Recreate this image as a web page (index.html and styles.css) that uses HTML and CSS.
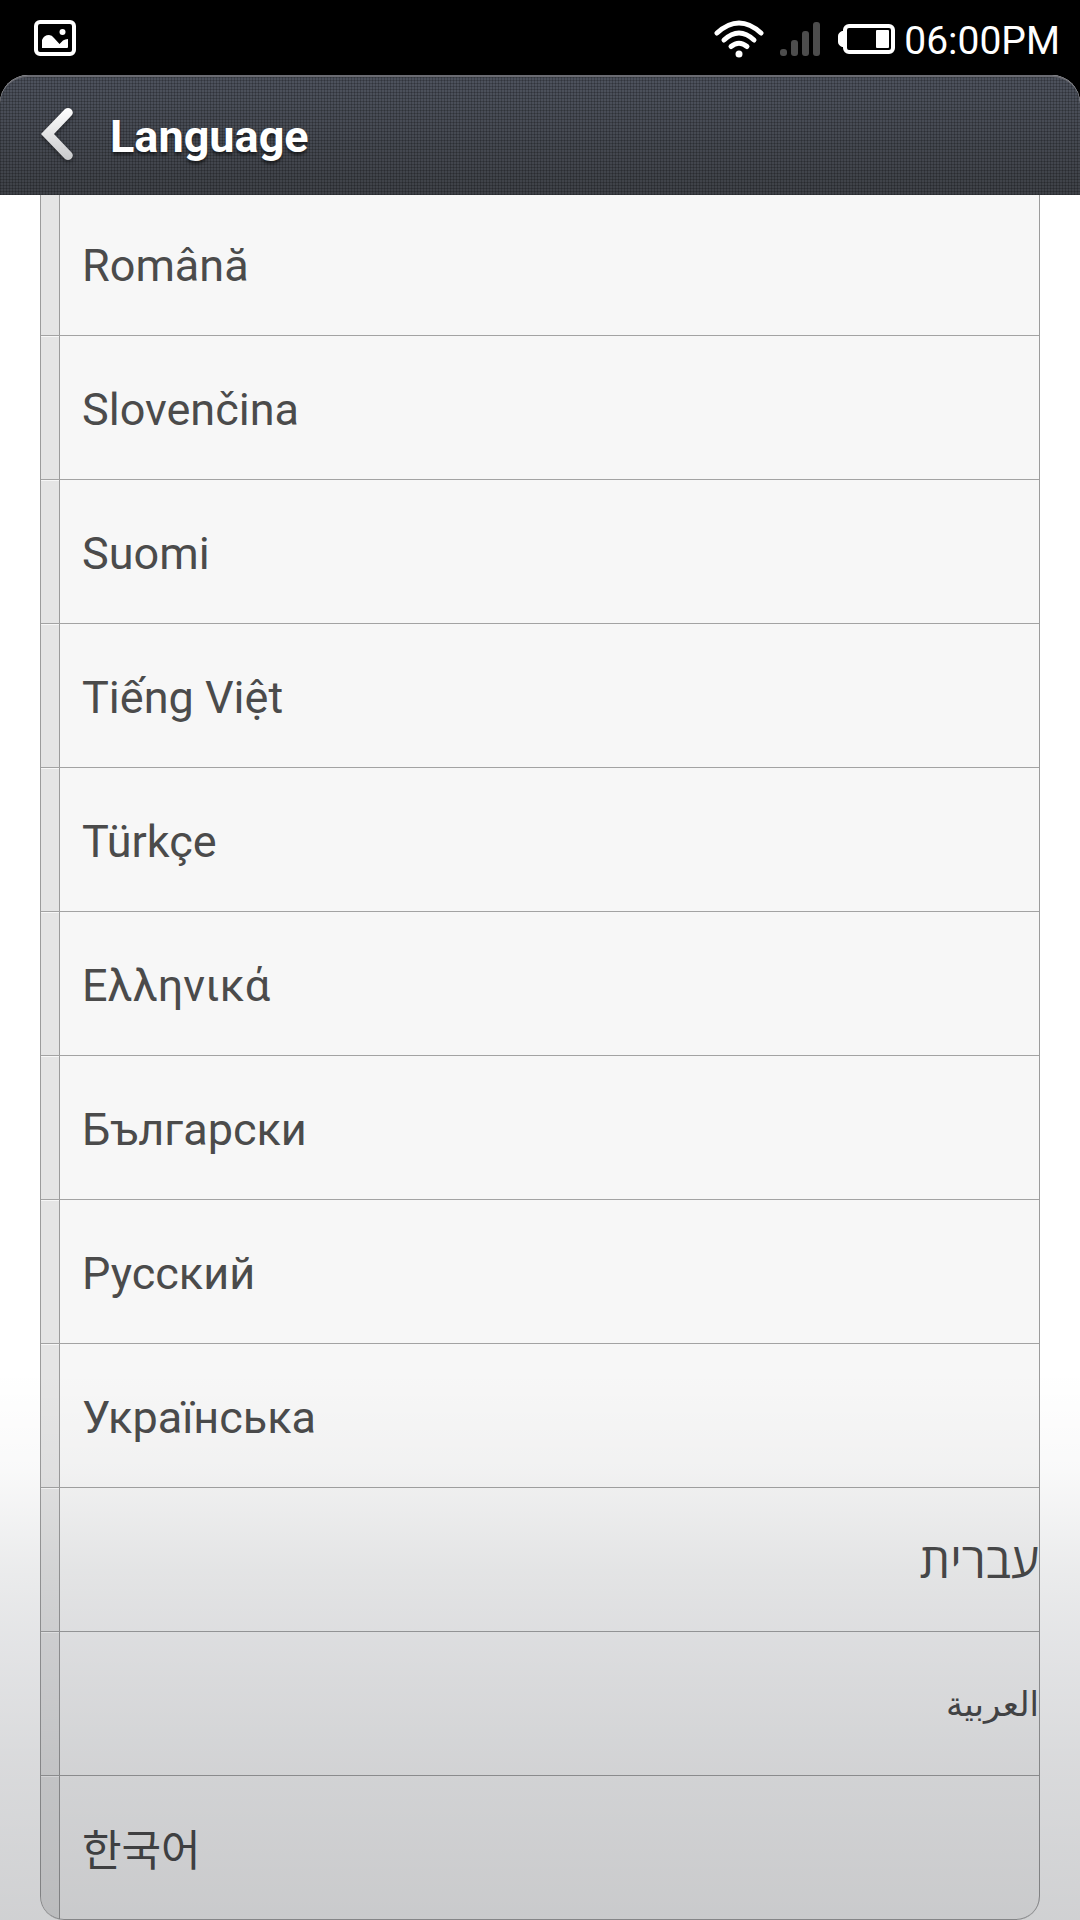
FILE: index.html
```html
<!DOCTYPE html>
<html lang="en">
<head>
    <meta charset="UTF-8">
    <meta name="viewport" content="width=device-width, initial-scale=1.0">
    <title>Language</title>
    <link rel="stylesheet" href="styles.css">
</head>
<body>

<div class="status-bar">
    <svg class="icon-picture" width="42" height="36" viewBox="0 0 42 36" aria-hidden="true">
        <rect x="2" y="2" width="38" height="32" rx="4" fill="none" stroke="#fff" stroke-width="4"/>
        <path d="M8 28V20Q10 15 15 15Q18 15 20 18L25.500 24L29 20.500Q31 19 34 19V27Q34 28 33 28Z" fill="#fff"/>
        <circle cx="28.500" cy="12" r="3" fill="#fff"/>
    </svg>
    <div class="status-icons">
        <svg width="50" height="38" viewBox="0 0 50 38" aria-hidden="true">
            <g fill="none" stroke="#fff" stroke-width="5" stroke-linecap="round">
                <path d="M3 13Q25 -7 47 13"/>
                <path d="M10 20Q25 6 40 20"/>
                <path d="M17 26.500Q25 20 33 26.500"/>
            </g>
            <circle cx="25" cy="34" r="3.500" fill="#fff"/>
        </svg>
        <svg class="icon-signal" width="40" height="34" viewBox="0 0 40 34" aria-hidden="true">
            <g fill="#4d4d4d">
                <rect x="0" y="27" width="7" height="7" rx="3"/>
                <rect x="11" y="18" width="7" height="16" rx="3"/>
                <rect x="22" y="9" width="7" height="25" rx="3"/>
                <rect x="33" y="0" width="7" height="34" rx="3"/>
            </g>
        </svg>
        <svg class="icon-battery" width="57" height="30" viewBox="0 0 57 30" aria-hidden="true">
            <path d="M7 7H4Q0 9 0 12V18Q0 21 4 23H7Z" fill="#fff"/>
            <rect x="7" y="2" width="48" height="26" rx="4" fill="none" stroke="#fff" stroke-width="4"/>
            <rect x="38" y="6" width="13" height="18" rx="1" fill="#fff"/>
        </svg>
        <span class="clock">06:00PM</span>
    </div>
</div>

<header class="title-bar">
    <button class="back" type="button" aria-label="Back">
        <svg width="34" height="54" viewBox="0 0 34 54" aria-hidden="true">
            <defs>
                <linearGradient id="arrow" x1="0" y1="0" x2="0" y2="1">
                    <stop offset="0" stop-color="#fff"/>
                    <stop offset="1" stop-color="#c8c9cb"/>
                </linearGradient>
            </defs>
            <path d="M1 27L25 2Q28 0 31 2Q34 5 32 8L14 27L32 46Q34 49 31 52Q28 54 25 52Z" fill="url(#arrow)"/>
        </svg>
    </button>
    <h1>Language</h1>
</header>

<main>
    <ul class="languages">
        <li><button type="button" lang="ro">Română</button></li>
        <li><button type="button" lang="sk">Slovenčina</button></li>
        <li><button type="button" lang="fi">Suomi</button></li>
        <li><button type="button" lang="vi">Tiếng Việt</button></li>
        <li><button type="button" lang="tr">Türkçe</button></li>
        <li><button type="button" lang="el">Ελληνικά</button></li>
        <li><button type="button" lang="bg">Български</button></li>
        <li><button type="button" lang="ru">Русский</button></li>
        <li><button type="button" lang="uk">Українська</button></li>
        <li><button type="button" class="rtl" lang="he" dir="rtl">עברית</button></li>
        <li><button type="button" class="rtl arabic" lang="ar" dir="rtl">العربية</button></li>
        <li><button type="button" class="korean" lang="ko">한국어</button></li>
    </ul>
</main>

</body>
</html>
```

FILE: styles.css
```css
* {
    box-sizing: border-box;
}
body {
    position: relative;
    margin: 0;
    background: #fff;
    color: #4b4b4b;
    font-family: Roboto, 'Open Sans', 'Noto Sans CJK KR', 'DejaVu Sans', sans-serif;
}
/* shade over the end of the list */
body::after {
    content: "";
    position: absolute;
    left: 0;
    right: 0;
    bottom: 0;
    height: 550px;
    pointer-events: none;
    background: linear-gradient(rgba(0, 10, 20, 0), rgba(0, 10, 20, 0.025) 18%, rgba(0, 10, 20, 0.08) 36%, rgba(0, 8, 25, 0.11) 50%, rgba(0, 6, 18, 0.15) 72%, rgba(0, 5, 14, 0.185));
}
.status-bar {
    display: flex;
    align-items: center;
    justify-content: space-between;
    height: 75px;
    padding: 0 20px 0 34px;
    background: #000;
    color: #fff;
}
.status-icons {
    display: flex;
    align-items: center;
    padding-top: 3px;
}
.icon-signal {
    margin-left: 16px;
}
.icon-battery {
    margin: 0 9px 0 18px;
}
.clock {
    padding-top: 4px;
    font-size: 39px;
    line-height: 60px;
}
.title-bar {
    position: relative;
    display: flex;
    align-items: center;
    height: 120px;
    margin-bottom: -3px;
    padding-left: 40px;
    border-top: 2px solid #6a6b72;
    border-radius: 28px 28px 0 0;
    background:
        repeating-linear-gradient(rgba(0, 0, 0, 0.2) 0 1px, transparent 1px 3px),
        repeating-linear-gradient(90deg, rgba(0, 0, 0, 0.2) 0 1px, transparent 1px 3px),
        linear-gradient(#4d525d, #3e4147);
    box-shadow: 0 -28px 0 28px #000;
    clip-path: inset(0);
    color: #fff;
}
.back {
    display: flex;
    padding: 0 0 4px;
    border: none;
    background: none;
    filter: drop-shadow(0 2px 2px rgba(0, 0, 0, 0.4));
    cursor: pointer;
}
.title-bar h1 {
    margin: 0 0 0 36px;
    padding-top: 2px;
    font-size: 45px;
    line-height: 60px;
    text-shadow: 0 3px 3px rgba(0, 0, 0, 0.5);
}
.languages {
    margin: 0 40px;
    padding: 0;
    border: solid #9c9c9c;
    border-width: 0 1px;
    border-radius: 0 0 24px 24px;
    background: #f7f7f7;
    list-style: none;
    overflow: hidden;
}
.languages li {
    height: 144px;
    padding-left: 18px;
    border-bottom: 1px solid #a3a3a3;
    background: linear-gradient(#f7f7f7 0 1px, #e5e5e5 1px) no-repeat 0 0 / 18px 100%;
}
.languages li:last-child {
    border-radius: 0 0 23px 23px;
}
.languages button {
    display: block;
    width: 100%;
    height: 100%;
    padding: 4px 0 0 22px;
    border: none;
    border-left: 1px solid #9c9c9c;
    background: none;
    color: inherit;
    font: inherit;
    font-size: 45px;
    text-align: start;
    cursor: pointer;
}
.languages .rtl {
    padding: 0;
    font-size: 48px;
}
.languages .arabic {
    font-size: 34px;
}
.languages .korean {
    padding: 0 0 2px 22px;
    font-size: 43px;
}
```
